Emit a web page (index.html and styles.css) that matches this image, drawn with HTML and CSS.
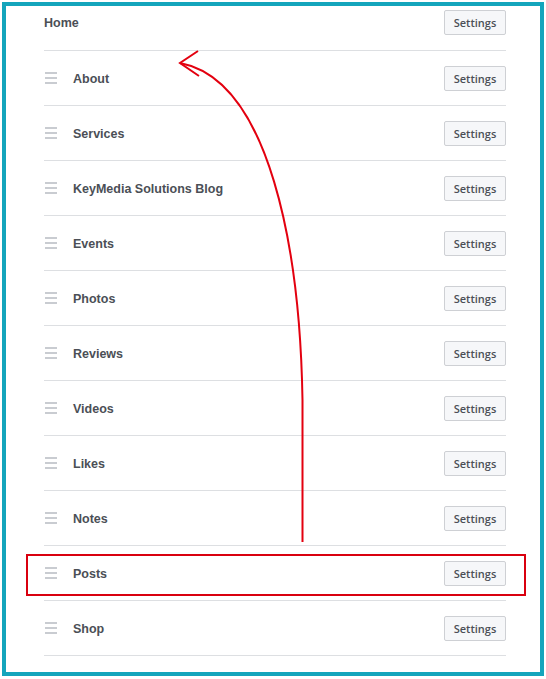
FILE: index.html
```html
<!DOCTYPE html>
<html>
<head>
<meta charset="utf-8">
<link rel="stylesheet" href="styles.css">
</head>
<body>
<div class="frame">
  <ul class="tabs">
    <li class="row home"><span class="label">Home</span><button class="btn">Settings</button></li>
    <li class="row"><span class="grip"></span><span class="label">About</span><button class="btn">Settings</button></li>
    <li class="row"><span class="grip"></span><span class="label">Services</span><button class="btn">Settings</button></li>
    <li class="row"><span class="grip"></span><span class="label">KeyMedia Solutions Blog</span><button class="btn">Settings</button></li>
    <li class="row"><span class="grip"></span><span class="label">Events</span><button class="btn">Settings</button></li>
    <li class="row"><span class="grip"></span><span class="label">Photos</span><button class="btn">Settings</button></li>
    <li class="row"><span class="grip"></span><span class="label">Reviews</span><button class="btn">Settings</button></li>
    <li class="row"><span class="grip"></span><span class="label">Videos</span><button class="btn">Settings</button></li>
    <li class="row"><span class="grip"></span><span class="label">Likes</span><button class="btn">Settings</button></li>
    <li class="row"><span class="grip"></span><span class="label">Notes</span><button class="btn">Settings</button></li>
    <li class="row"><span class="grip"></span><span class="label">Posts</span><button class="btn">Settings</button></li>
    <li class="row"><span class="grip"></span><span class="label">Shop</span><button class="btn">Settings</button></li>
  </ul>
  <div class="highlight"></div>
  <svg class="arrow" width="546" height="679" viewBox="0 0 546 679">
    <path d="M302.5 542 L302.5 400 C300 250 270 80 180 63" fill="none" stroke="#e3000f" stroke-width="2"/>
    <path d="M198 51 L180 63 L199 76" fill="none" stroke="#e3000f" stroke-width="2"/>
  </svg>
</div>
</body>
</html>
```
FILE: styles.css
```css
html, body {
  margin: 0;
  padding: 0;
  background: #ffffff;
}
.frame {
  margin: 2px;
  width: 534px;
  height: 666px;
  border: 4px solid #14a5bc;
  background: #fff;
  font-family: "Liberation Sans", Arial, sans-serif;
}
.tabs {
  list-style: none;
  margin: 0;
  padding: 0 34px 0 38px;
}
.row {
  display: flex;
  align-items: center;
  height: 54px;
  border-bottom: 1px solid #dddfe2;
}
.row.home {
  height: 33px;
  padding-bottom: 11px;
}
.grip {
  width: 12px;
  height: 12px;
  margin-left: 1px;
  margin-right: 16px;
  background: linear-gradient(#c9ccd1 0 2px, transparent 2px 5px, #c9ccd1 5px 7px, transparent 7px 10px, #c9ccd1 10px 12px);
}
.label {
  flex: 1;
  font-size: 12.5px;
  font-weight: bold;
  color: #4b4f56;
  padding-top: 1px;
}
.btn {
  width: 62px;
  height: 25px;
  padding: 0;
  background: #f6f7f9;
  border: 1px solid #ced0d4;
  border-radius: 2px;
  font-family: "Open Sans", sans-serif;
  font-size: 11px;
  font-weight: 600;
  color: #4b4f56;
}
.highlight {
  position: absolute;
  left: 26px;
  top: 554px;
  width: 496px;
  height: 38px;
  border: 2px solid #d9000f;
}
.arrow {
  position: absolute;
  left: 0;
  top: 0;
  pointer-events: none;
}
```
